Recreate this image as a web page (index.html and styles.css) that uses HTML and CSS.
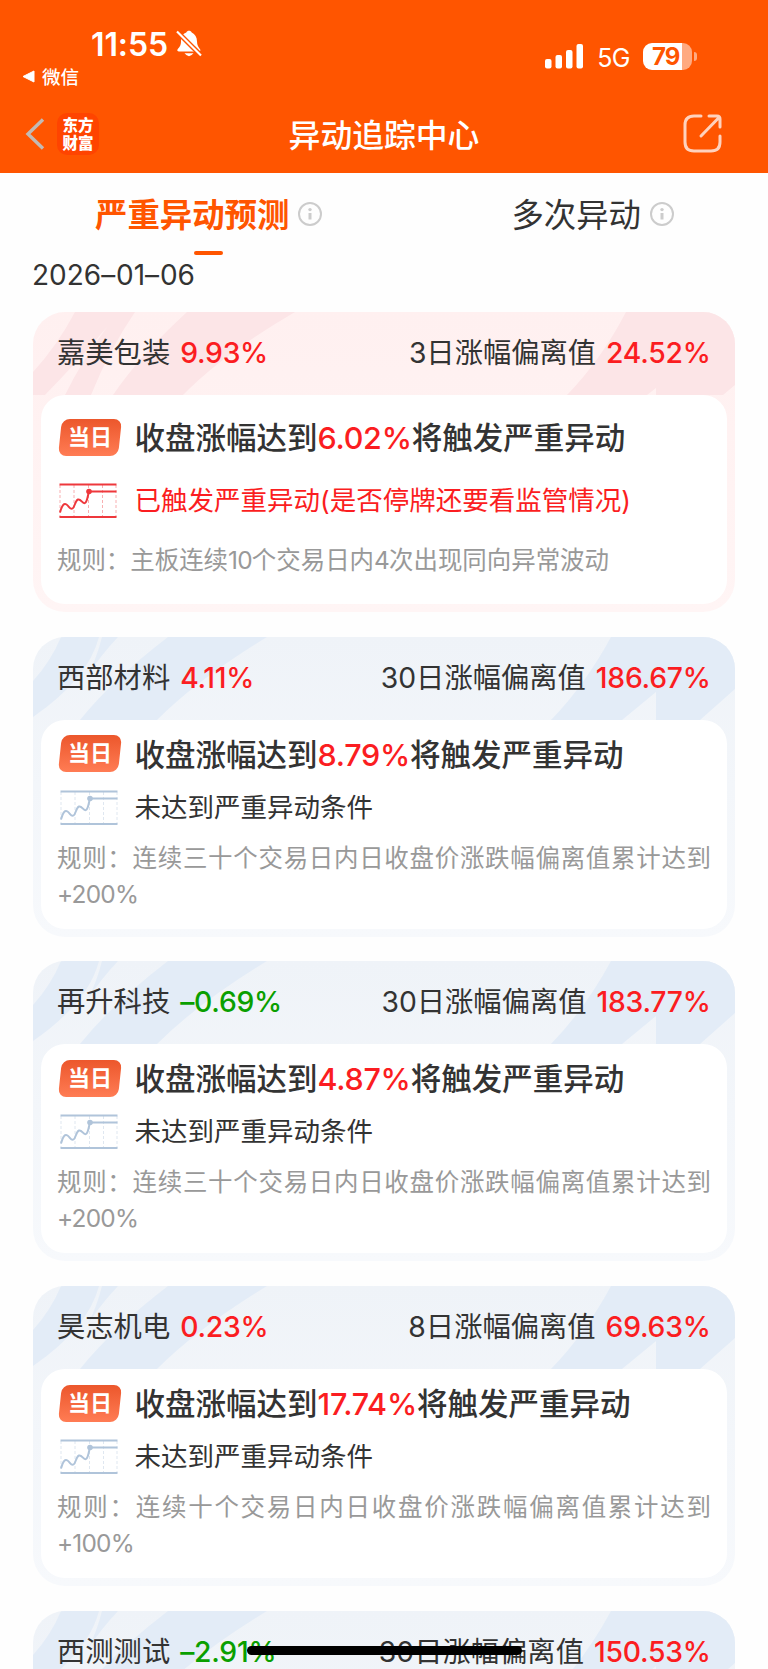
FILE: index.html
```html
<!DOCTYPE html>
<html lang="zh-CN">
<head>
    <meta charset="UTF-8">
    <meta name="viewport" content="width=device-width, initial-scale=1.0">
    <title>异动追踪中心</title>
    <link rel="stylesheet" href="styles.css">
</head>
<body>
    <!-- общие иконки -->
    <svg class="sprite" width="0" height="0">
        <symbol id="chart" viewBox="0 0 58 36">
            <path d="M1 2v32M15 2v32M29.500 2v32M43.500 2v32M57 2v32" stroke-width="1" stroke-dasharray="3 2" opacity=".4"/>
            <path d="M.5 1.500h57M.5 34h57" stroke-width="2.200"/>
            <path d="M1 29.500C3 22 5 20 7.500 21.500S11 27 13.500 25.500 16 17.500 19 16.500s4.500 5 7 3.500S28.500 13 30 8.500h27.500" fill="none" stroke-width="2"/>
            <circle cx="30" cy="8.500" r="2.800" fill="currentColor" stroke="none"/>
        </symbol>
        <symbol id="info" viewBox="0 0 24 24">
            <circle cx="12" cy="12" r="11" fill="none" stroke="currentColor" stroke-width="2"/>
            <circle cx="12" cy="7.600" r="1.700" fill="currentColor"/>
            <path d="M12 11v6.500" stroke="currentColor" stroke-width="3"/>
        </symbol>
        <symbol id="stripes" viewBox="0 0 702 83">
            <path d="M28 0H66Q55 42 0 80V44Q18 24 28 0ZM69 0H85Q68 18 55 38 64 20 69 0ZM135 0H234Q165 42 124 83H47Q80 42 135 0ZM578 0H702V52L667 83H623V55L589 83H518Q552 48 578 0Z" fill="currentColor"/>
        </symbol>
        <symbol id="stripes-hot" viewBox="0 0 702 83">
            <path d="M42 0H102Q76 38 58 83H32Q48 50 74 15 46 48 12 83H0V60Q24 34 42 0ZM154 0H262Q190 42 150 83H80Q108 42 154 0ZM593 0H702V73L690 83H623V76L614 83H534Q568 48 593 0Z" fill="currentColor"/>
        </symbol>
    </svg>

    <header class="header">
        <div class="status-bar">
            <div class="status-left">
                <div class="time">11:55
                    <svg class="bell" width="26" height="28" viewBox="0 0 26 28">
                        <path d="M1.500 19.500C3.500 17 5 15.500 5 11.500 5 6 7.500 3.500 10.300 2.500 11 .3 15 .3 15.700 2.500 19 4 21 7 21 11.500c0 4 1.500 5.500 3.200 8 .5 1-.2 1.900-1 1.900H2.800C1.500 21.400 1 20.500 1.500 19.500ZM8.500 23.300h9Q13 29 8.500 23.300Z" fill="#fff"/>
                        <path d="M1 1.500 25 25.500" stroke="#f50" stroke-width="4.800"/>
                        <path d="M1 1.500 25 25.500" stroke="#fff" stroke-width="2.200"/>
                    </svg>
                </div>
                <div class="back-app">
                    <svg width="13" height="13" viewBox="0 0 13 13"><path d="M1 6.500 12 1v11Z" fill="#fff" stroke="#fff" stroke-linejoin="round"/></svg>
                    <span>微信</span>
                </div>
            </div>
            <div class="status-right">
                <svg class="signal" width="39" height="25" viewBox="0 0 39 25" fill="#fff">
                    <rect x="0" y="15" width="6.500" height="9.500" rx="2"/>
                    <rect x="10.500" y="11" width="6.500" height="13.500" rx="2"/>
                    <rect x="21" y="6" width="6.500" height="18.500" rx="2"/>
                    <rect x="31.500" y="0" width="6.500" height="24.500" rx="2"/>
                </svg>
                <span class="network">5G</span>
                <div class="battery"><span>79</span></div>
                <i class="battery-cap"></i>
            </div>
        </div>
        <div class="nav">
            <svg class="back" width="20" height="32" viewBox="0 0 20 32"><path d="M18 1.500 3 16 18 30.500" fill="none" stroke="#c2bab4" stroke-width="3.400"/></svg>
            <div class="logo">东方<br>财富</div>
            <h1>异动追踪中心</h1>
            <svg class="share" width="40" height="40" viewBox="0 0 40 40" fill="none" stroke="#ffd2bd" stroke-width="3" stroke-linecap="round" stroke-linejoin="round">
                <path d="M18 2H11Q2 2 2 11V28Q2 37 11 37H28Q37 37 37 28V22M26 2H34Q37 2 37 5V13M36 3.500 18 22"/>
            </svg>
        </div>
    </header>

    <nav class="tabs">
        <div class="tab active"><span>严重异动预测</span><svg class="info"><use href="#info"/></svg></div>
        <div class="tab"><span>多次异动</span><svg class="info"><use href="#info"/></svg></div>
    </nav>
    <div class="date">2026<i>–</i>01<i>–</i>06</div>

    <main class="list">
        <section class="card hot">
            <svg class="stripes"><use href="#stripes-hot"/></svg>
            <div class="card-head">
                <div>嘉美包装 <b class="up">9.93%</b></div>
                <div>3日涨幅偏离值 <b class="up">24.52%</b></div>
            </div>
            <div class="card-body">
                <div class="row"><span class="tag"><em>当日</em></span><h2>收盘涨幅达到<b class="up">6.02%</b>将触发严重异动</h2></div>
                <div class="row state"><svg class="chart"><use href="#chart"/></svg><p>已触发严重异动(是否停牌还要看监管情况)</p></div>
                <div class="rule">规则：主板连续<span>10</span>个交易日内<span>4</span>次出现同向异常波动</div>
            </div>
        </section>

        <section class="card">
            <svg class="stripes"><use href="#stripes"/></svg>
            <div class="card-head">
                <div>西部材料 <b class="up">4.11%</b></div>
                <div>30日涨幅偏离值 <b class="up">186.67%</b></div>
            </div>
            <div class="card-body">
                <div class="row"><span class="tag"><em>当日</em></span><h2>收盘涨幅达到<b class="up">8.79%</b>将触发严重异动</h2></div>
                <div class="row state"><svg class="chart"><use href="#chart"/></svg><p>未达到严重异动条件</p></div>
                <div class="rule">规则：连续三十个交易日内日收盘价涨跌幅偏离值累计达到<span>+200%</span></div>
            </div>
        </section>

        <section class="card">
            <svg class="stripes"><use href="#stripes"/></svg>
            <div class="card-head">
                <div>再升科技 <b class="down">–0.69%</b></div>
                <div>30日涨幅偏离值 <b class="up">183.77%</b></div>
            </div>
            <div class="card-body">
                <div class="row"><span class="tag"><em>当日</em></span><h2>收盘涨幅达到<b class="up">4.87%</b>将触发严重异动</h2></div>
                <div class="row state"><svg class="chart"><use href="#chart"/></svg><p>未达到严重异动条件</p></div>
                <div class="rule">规则：连续三十个交易日内日收盘价涨跌幅偏离值累计达到<span>+200%</span></div>
            </div>
        </section>

        <section class="card">
            <svg class="stripes"><use href="#stripes"/></svg>
            <div class="card-head">
                <div>昊志机电 <b class="up">0.23%</b></div>
                <div>8日涨幅偏离值 <b class="up">69.63%</b></div>
            </div>
            <div class="card-body">
                <div class="row"><span class="tag"><em>当日</em></span><h2>收盘涨幅达到<b class="up">17.74%</b>将触发严重异动</h2></div>
                <div class="row state"><svg class="chart"><use href="#chart"/></svg><p>未达到严重异动条件</p></div>
                <div class="rule">规则：连续十个交易日内日收盘价涨跌幅偏离值累计达到<span>+100%</span></div>
            </div>
        </section>

        <section class="card">
            <svg class="stripes"><use href="#stripes"/></svg>
            <div class="card-head">
                <div>西测测试 <b class="down">–2.91%</b></div>
                <div>30日涨幅偏离值 <b class="up">150.53%</b></div>
            </div>
        </section>
    </main>
    <div class="home-bar"></div>
</body>
</html>
```
FILE: styles.css
```css
* {
    box-sizing: border-box;
    margin: 0;
    padding: 0;
}
body {
    position: relative;
    width: 768px;
    height: 1669px;
    overflow: hidden;
    background: #fefefe;
    color: #333;
    font-family: Inter, "Noto Sans CJK SC", sans-serif;
}
.sprite {
    position: absolute;
}

/* шапка */
.header {
    height: 173px;
    background: #ff5500;
    color: #fff;
}
.status-bar {
    display: flex;
    justify-content: space-between;
    height: 96px;
    padding: 28px 71px 0 22px;
}
.time {
    display: flex;
    align-items: center;
    gap: 8px;
    height: 32px;
    padding-left: 69px;
    font-size: 32px;
    font-weight: 600;
    letter-spacing: -0.1px;
}
.back-app {
    display: flex;
    align-items: center;
    gap: 7px;
    height: 32px;
    font-size: 18.5px;
    font-weight: 500;
}
.status-right {
    display: flex;
    align-items: center;
    height: 56px;
}
.network {
    margin: 4px 13px 0 13px;
    font-size: 25px;
    letter-spacing: -0.5px;
}
.battery {
    width: 49px;
    height: 27px;
    border-radius: 9px;
    background: linear-gradient(90deg, #fff 39px, #ffaa80 39px);
    color: #ff5500;
    font-size: 24px;
    font-weight: 700;
    line-height: 27px;
    padding-left: 9px;
    letter-spacing: -1px;
}
.battery-cap {
    width: 3px;
    height: 9px;
    margin-left: 2px;
    border-radius: 0 3px 3px 0;
    background: #ffaa80;
}
.nav {
    display: flex;
    align-items: center;
    height: 76px;
    padding: 0 45px 0 25px;
}
.logo {
    width: 42px;
    height: 42px;
    margin-left: 12px;
    border-radius: 10px;
    background: #ff4400;
    font: 900 15.5px/18px "Noto Sans CJK SC", sans-serif;
    text-align: center;
    padding-top: 2px;
}
h1 {
    flex: 1;
    padding: 0 14px 3px 0;
    text-align: center;
    font-size: 31.800px;
    font-weight: 500;
}

/* вкладки */
.tabs {
    display: flex;
    justify-content: space-between;
    height: 82px;
    padding: 0 94px 0 95px;
}
.tab {
    position: relative;
    display: flex;
    align-items: center;
    gap: 9px;
    height: 82px;
    font-size: 32.400px;
}
.tab span {
    padding-bottom: 3px;
}
.tab.active {
    color: #ff5500;
    font-weight: 700;
}
.tab.active::after {
    content: "";
    position: absolute;
    left: 99px;
    bottom: 0;
    width: 29px;
    height: 4px;
    border-radius: 2px;
    background: #ff5500;
}
.info {
    width: 24px;
    height: 24px;
    color: #ccc;
}
.date {
    height: 57px;
    padding-left: 32px;
    font-size: 28px;
    line-height: 40px;
}
.date i {
    font-style: normal;
    letter-spacing: 0.8px;
}

/* карточки */
.list {
    display: flex;
    flex-direction: column;
    gap: 24.700px;
    padding: 0 33px;
}
.card {
    position: relative;
    flex: none;
    height: 300px;
    padding: 0 8px;
    border-radius: 32px;
    overflow: hidden;
    color: #e3ecf7;
    background: linear-gradient(#eff3f8, #f7f9fc);
}
.card.hot {
    color: #fce5e7;
    background: linear-gradient(#fff0f0, #fff5f5);
}
.stripes {
    position: absolute;
    left: 0;
    top: 0;
    width: 702px;
    height: 83px;
}
.card-head {
    position: relative;
    display: flex;
    justify-content: space-between;
    height: 83px;
    padding: 0 16.5px 0 16px;
    color: #333;
    font-size: 28.300px;
    line-height: 82.500px;
}
b {
    font-weight: 500;
    letter-spacing: -0.25px;
}
.card-head b {
    margin-left: 2px;
}
.up {
    color: #fb1d21;
}
.down {
    color: #0a9f00;
}
.card-body {
    position: relative;
    height: 209px;
    padding: 9px 16px 0;
    border-radius: 24px;
    background: #fff;
    color: #333;
}
.row {
    display: flex;
    align-items: center;
    height: 50px;
}
.tag {
    width: 60px;
    height: 37px;
    margin: 0 15px 0 2.5px;
    border-radius: 8px;
    background: linear-gradient(#ec572c, #ff7c54);
    transform: skewX(-6deg);
    color: #fff;
    text-align: center;
    font-size: 22px;
    font-weight: 700;
    line-height: 36px;
}
.tag em {
    display: block;
    font-style: normal;
    transform: skewX(6deg);
}
h2 {
    padding-bottom: 2px;
    font-size: 30.500px;
    font-weight: 500;
    white-space: nowrap;
}
.state {
    height: 56px;
    font-size: 26.500px;
}
.state p {
    padding-bottom: 3px;
}
.chart {
    width: 60px;
    height: 36px;
    margin: 2px 16px 0 1.5px;
    color: #b0c4da;
    stroke: #b0c4da;
}
.rule {
    width: 654px;
    padding-top: 5px;
    color: #999;
    font-size: 24.450px;
    line-height: 36px;
    text-align: justify;
}
.rule span {
    letter-spacing: -0.8px;
}
.hot .card-body {
    padding-top: 17px;
}
.hot .state {
    height: 76px;
    color: #fb1d21;
}
.hot .chart {
    width: 58px;
    margin-right: 18px;
    color: #ee383c;
    stroke: #ee383c;
}
.hot .rule {
    padding-top: 0;
    line-height: 45px;
}

.home-bar {
    position: absolute;
    left: 247px;
    top: 1646px;
    width: 275px;
    height: 9px;
    border-radius: 5px;
    background: #000;
}
```
